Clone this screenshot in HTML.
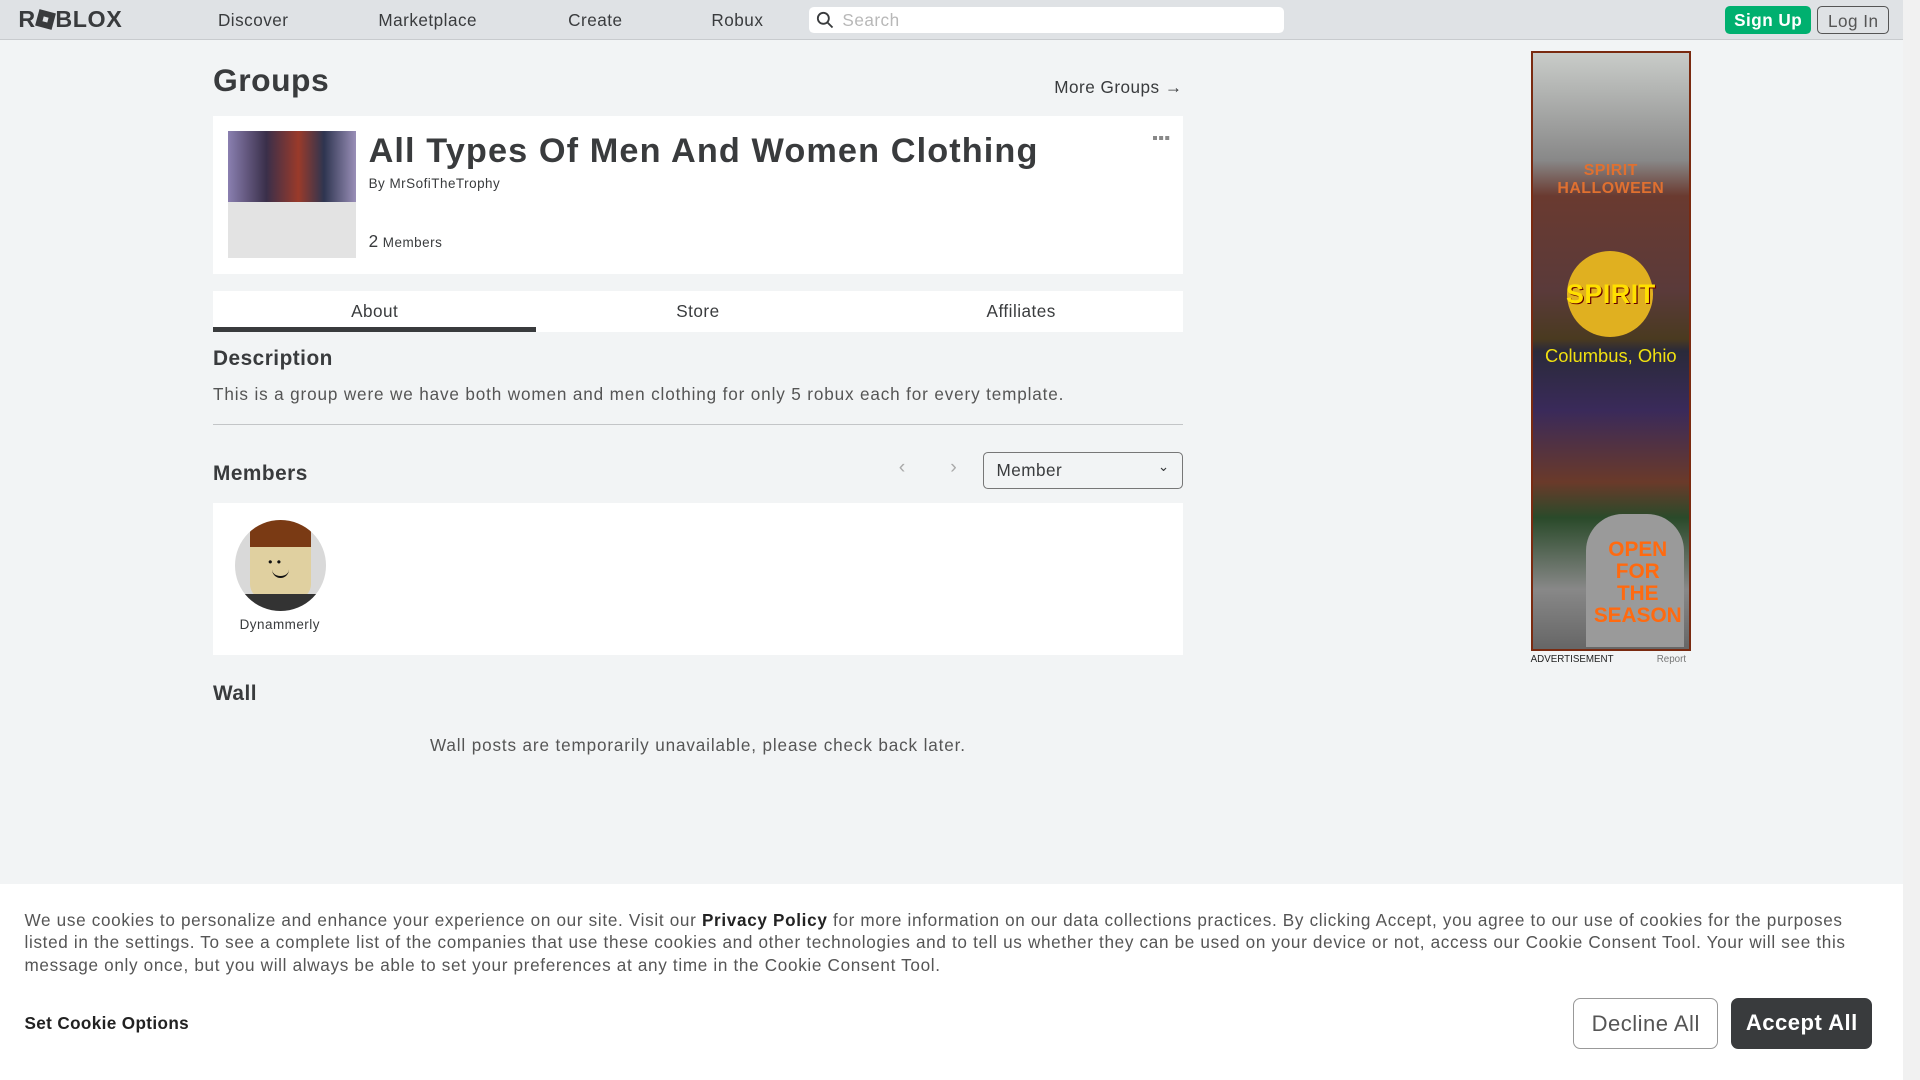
<!DOCTYPE html>
<html><head><meta charset="utf-8"><style>
html{zoom:1.22449}
*{box-sizing:border-box;margin:0;padding:0}
body{width:1568px;height:882px;overflow:hidden;background:#f2f4f5;font-family:"Liberation Sans",sans-serif;color:#393b3d;position:relative;letter-spacing:0.4px}
.a{position:absolute}
.nav{left:0;top:0;width:1554px;height:33px;background:#dfe2e5;border-bottom:1px solid #c8cbce}
.nav .l{font-size:14px;top:8px;color:#393b3d}
.logo{left:15px;top:5px;font-size:19px;font-weight:900;letter-spacing:0.5px;color:#393b3d}
.search{left:661px;top:6px;width:388px;height:21px;background:#fff;border-radius:4px;font-size:14px;color:#b8b8b8;padding:2px 0 0 27px}
.btn{border-radius:4px;font-size:14px;font-weight:bold;text-align:center}
.sb{top:0;width:14px;height:882px;background:#f1f1f1;left:1554px}
.card{background:#fff}
.ck{left:0;top:722px;width:1554px;height:160px;background:#fff}
</style></head><body>
<div class="a nav">
<div class="a logo">R<span style="display:inline-block;width:14px;height:14px;background:#393b3d;transform:rotate(15deg);margin:0 1px;vertical-align:-1px;position:relative"><span style="position:absolute;left:5px;top:5px;width:4px;height:4px;background:#dfe2e5"></span></span>BLOX</div>
<div class="a l" style="left:178px">Discover</div>
<div class="a l" style="left:309px">Marketplace</div>
<div class="a l" style="left:464px">Create</div>
<div class="a l" style="left:581px">Robux</div>
<div class="a search">Search</div>
<svg class="a" style="left:666px;top:9px" width="15" height="15" viewBox="0 0 15 15"><circle cx="6" cy="6" r="4.5" fill="none" stroke="#393b3d" stroke-width="1.5"/><path d="M9.5 9.5L13.5 13.5" stroke="#393b3d" stroke-width="1.5"/></svg>
<div class="a btn" style="left:1409px;top:5px;width:70px;height:23px;background:#00b06f;color:#fff;padding-top:3px">Sign Up</div>
<div class="a btn" style="left:1484px;top:5px;width:59px;height:23px;border:1px solid #555;color:#555;font-weight:normal;padding-top:3px">Log In</div>
</div>
<div class="a sb"></div>

<div class="a" style="left:174px;top:51px;font-size:26px;font-weight:bold">Groups</div>
<div class="a" style="left:861px;top:63px;font-size:14px">More Groups →</div>

<div class="a card" style="left:174px;top:95px;width:792px;height:129px"></div>
<div class="a" style="left:186px;top:107px;width:105px;height:104px;background:#e3e3e3"></div>
<div class="a" style="left:186px;top:107px;width:105px;height:58px;background:linear-gradient(90deg,#8a7fb0,#3a2f4a 30%,#9a3a2a 55%,#2e3550 75%,#9a8fb8)"></div>
<div class="a" style="left:301px;top:108px;font-size:28px;font-weight:bold;letter-spacing:0.9px">All Types Of Men And Women Clothing</div>
<div class="a" style="left:301px;top:144px;font-size:11px">By MrSofiTheTrophy</div>
<div class="a" style="left:301px;top:189px;font-size:11px"><span style="font-size:14px">2</span> Members</div>
<div class="a" style="left:942px;top:111px;width:3px;height:3px;background:#888;box-shadow:5px 0 #888,10px 0 #888"></div>

<div class="a card" style="left:174px;top:238px;width:792px;height:33px"></div>
<div class="a" style="left:174px;top:267px;width:264px;height:4px;background:#393b3d"></div>
<div class="a" style="left:174px;top:246px;width:264px;text-align:center;font-size:14px">About</div>
<div class="a" style="left:438px;top:246px;width:264px;text-align:center;font-size:14px">Store</div>
<div class="a" style="left:702px;top:246px;width:264px;text-align:center;font-size:14px">Affiliates</div>

<div class="a" style="left:174px;top:283px;font-size:17px;font-weight:bold">Description</div>
<div class="a" style="left:174px;top:314px;font-size:14px;color:#555;letter-spacing:0.7px">This is a group were we have both women and men clothing for only 5 robux each for every template.</div>
<div class="a" style="left:174px;top:346px;width:792px;height:1px;background:#c3c5c7"></div>

<div class="a" style="left:174px;top:377px;font-size:17px;font-weight:bold">Members</div>
<div class="a" style="left:734px;top:372px;font-size:16px;color:#aaa">‹</div>
<div class="a" style="left:776px;top:372px;font-size:16px;color:#aaa">›</div>
<div class="a" style="left:803px;top:369px;width:163px;height:30px;border:1px solid #777;border-radius:4px;font-size:14px;padding:6px 10px">Member<span style="position:absolute;right:10px;top:5px;font-size:11px">⌄</span></div>

<div class="a card" style="left:174px;top:411px;width:792px;height:124px"></div>
<div class="a" style="left:192px;top:425px;width:74px;height:74px;border-radius:50%;background:#d9d9d9;overflow:hidden">
<div class="a" style="left:12px;top:8px;width:50px;height:56px;background:#e0d0a0;border-radius:12px"></div>
<div class="a" style="left:12px;top:0;width:50px;height:22px;background:#7a3a14;border-radius:10px 10px 0 0"></div>
<div class="a" style="left:4px;top:60px;width:66px;height:20px;background:#333"></div>
<div class="a" style="left:27px;top:28px;font-size:10px;color:#111">• •</div>
<div class="a" style="left:30px;top:40px;width:14px;height:7px;border-bottom:2px solid #111;border-radius:0 0 8px 8px"></div>
</div>
<div class="a" style="left:174px;top:504px;width:109px;text-align:center;font-size:11px">Dynammerly</div>

<div class="a" style="left:174px;top:557px;font-size:17px;font-weight:bold">Wall</div>
<div class="a" style="left:174px;top:600px;width:792px;text-align:center;font-size:14px;color:#555;letter-spacing:0.7px">Wall posts are temporarily unavailable, please check back later.</div>

<div class="a" style="left:1250px;top:42px;width:131px;height:490px;border:2px solid #7a2a10;background:linear-gradient(180deg,#c9ccc9 0%,#888 18%,#6a3a30 24%,#5a3a3a 40%,#4a3a20 48%,#2a2a3a 50%,#3a2a5a 60%,#6a3a2a 72%,#2a4a2a 78%,#888 90%,#666 100%)"></div>
<div class="a" style="left:1252px;top:132px;width:127px;text-align:center;font-size:13px;color:#e07030;font-weight:bold">SPIRIT HALLOWEEN</div>
<div class="a" style="left:1280px;top:205px;width:70px;height:70px;border-radius:50%;background:#e0b020"></div>
<div class="a" style="left:1252px;top:228px;width:127px;text-align:center;font-size:22px;color:#ffe000;font-weight:bold;text-shadow:1px 1px #600">SPIRIT</div>
<div class="a" style="left:1252px;top:282px;width:127px;text-align:center;font-size:15px;color:#f0e010;letter-spacing:0">Columbus, Ohio</div>
<div class="a" style="left:1295px;top:420px;width:80px;height:108px;background:#9a9a9a;border-radius:30px 30px 0 0"></div>
<div class="a" style="left:1295px;top:440px;width:85px;text-align:center;font-size:17px;line-height:18px;color:#ff6a10;font-weight:bold;letter-spacing:0">OPEN<br>FOR<br>THE<br>SEASON</div>
<div class="a" style="left:1250px;top:534px;font-size:8px;color:#222;letter-spacing:0">ADVERTISEMENT</div>
<div class="a" style="left:1353px;top:534px;font-size:8px;color:#777;letter-spacing:0">Report</div>

<div class="a ck"></div>
<div class="a" style="left:20px;top:742px;width:1520px;font-size:14px;line-height:18.5px;color:#555;letter-spacing:0.55px">We use cookies to personalize and enhance your experience on our site. Visit our <b style="color:#222">Privacy Policy</b> for more information on our data collections practices. By clicking Accept, you agree to our use of cookies for the purposes listed in the settings. To see a complete list of the companies that use these cookies and other technologies and to tell us whether they can be used on your device or not, access our Cookie Consent Tool. Your will see this message only once, but you will always be able to set your preferences at any time in the Cookie Consent Tool.</div>
<div class="a" style="left:20px;top:827px;font-size:14px;color:#222;font-weight:bold;letter-spacing:0.3px">Set Cookie Options</div>
<div class="a btn" style="left:1285px;top:815px;width:118px;height:42px;border:1px solid #999;font-size:18px;font-weight:normal;color:#555;padding-top:10px;border-radius:6px">Decline All</div>
<div class="a btn" style="left:1414px;top:815px;width:115px;height:42px;background:#393b3d;font-size:18px;color:#fff;padding-top:10px;border-radius:6px">Accept All</div>
</body></html>
